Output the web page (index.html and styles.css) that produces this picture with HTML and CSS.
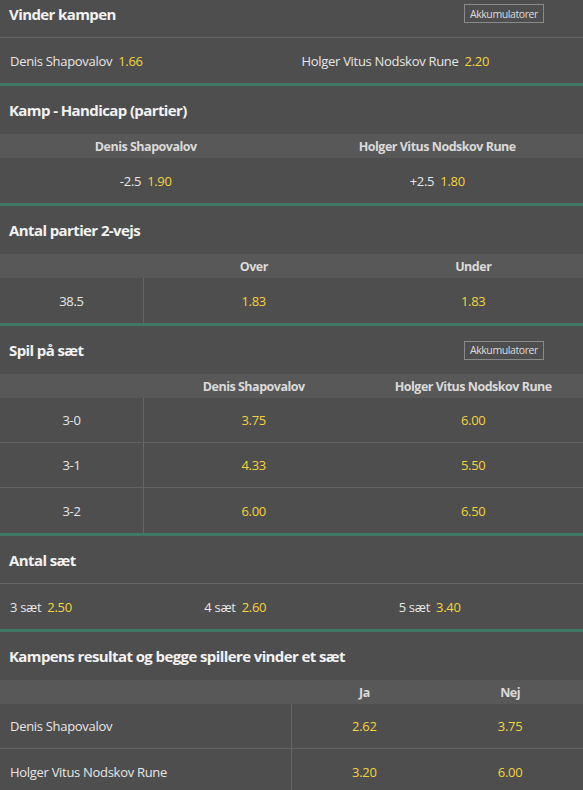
FILE: index.html
```html
<!DOCTYPE html>
<html lang="da">
<head>
<meta charset="utf-8">
<title>Tennis markeder</title>
<link rel="stylesheet" href="styles.css">
</head>
<body>
<div class="page">

  <section class="market">
    <div class="mtitle lined">
      <h2>Vinder kampen</h2>
      <span class="acc">Akkumulatorer</span>
    </div>
    <div class="row cols-2 left">
      <div class="cell"><span class="lbl">Denis Shapovalov</span><span class="odd">1.66</span></div>
      <div class="cell"><span class="lbl">Holger Vitus Nodskov Rune</span><span class="odd">2.20</span></div>
    </div>
  </section>

  <section class="market">
    <div class="mtitle"><h2>Kamp - Handicap (partier)</h2></div>
    <div class="band cols-2">
      <div class="hcell">Denis Shapovalov</div>
      <div class="hcell">Holger Vitus Nodskov Rune</div>
    </div>
    <div class="row cols-2 center">
      <div class="cell"><span class="lbl">-2.5</span><span class="odd">1.90</span></div>
      <div class="cell"><span class="lbl">+2.5</span><span class="odd">1.80</span></div>
    </div>
  </section>

  <section class="market">
    <div class="mtitle"><h2>Antal partier 2-vejs</h2></div>
    <div class="band cols-3">
      <div class="hcell"></div>
      <div class="hcell">Over</div>
      <div class="hcell">Under</div>
    </div>
    <div class="row cols-3 center">
      <div class="cell first"><span class="lbl">38.5</span></div>
      <div class="cell"><span class="odd solo">1.83</span></div>
      <div class="cell"><span class="odd solo">1.83</span></div>
    </div>
  </section>

  <section class="market">
    <div class="mtitle">
      <h2>Spil på sæt</h2>
      <span class="acc">Akkumulatorer</span>
    </div>
    <div class="band cols-3">
      <div class="hcell"></div>
      <div class="hcell">Denis Shapovalov</div>
      <div class="hcell">Holger Vitus Nodskov Rune</div>
    </div>
    <div class="row cols-3 center">
      <div class="cell first"><span class="lbl">3-0</span></div>
      <div class="cell"><span class="odd solo">3.75</span></div>
      <div class="cell"><span class="odd solo">6.00</span></div>
    </div>
    <div class="row cols-3 center">
      <div class="cell first"><span class="lbl">3-1</span></div>
      <div class="cell"><span class="odd solo">4.33</span></div>
      <div class="cell"><span class="odd solo">5.50</span></div>
    </div>
    <div class="row cols-3 center">
      <div class="cell first"><span class="lbl">3-2</span></div>
      <div class="cell"><span class="odd solo">6.00</span></div>
      <div class="cell"><span class="odd solo">6.50</span></div>
    </div>
  </section>

  <section class="market">
    <div class="mtitle lined"><h2>Antal sæt</h2></div>
    <div class="row cols-3even left">
      <div class="cell"><span class="lbl">3 sæt</span><span class="odd">2.50</span></div>
      <div class="cell"><span class="lbl">4 sæt</span><span class="odd">2.60</span></div>
      <div class="cell"><span class="lbl">5 sæt</span><span class="odd">3.40</span></div>
    </div>
  </section>

  <section class="market">
    <div class="mtitle"><h2>Kampens resultat og begge spillere vinder et sæt</h2></div>
    <div class="band cols-wide">
      <div class="hcell"></div>
      <div class="hcell">Ja</div>
      <div class="hcell">Nej</div>
    </div>
    <div class="row cols-wide center">
      <div class="cell first leftcell"><span class="lbl">Denis Shapovalov</span></div>
      <div class="cell"><span class="odd solo">2.62</span></div>
      <div class="cell"><span class="odd solo">3.75</span></div>
    </div>
    <div class="row cols-wide center">
      <div class="cell first leftcell"><span class="lbl">Holger Vitus Nodskov Rune</span></div>
      <div class="cell"><span class="odd solo">3.20</span></div>
      <div class="cell"><span class="odd solo">6.00</span></div>
    </div>
  </section>

</div>
</body>
</html>
```

FILE: styles.css
```css
* { box-sizing: border-box; }

html, body {
  margin: 0;
  padding: 0;
  background: #4e4e4e;
}

body {
  font-family: "Open Sans", "Noto Sans", "Liberation Sans", sans-serif;
  font-size: 13px;
  color: #e6e6e6;
  overflow: hidden;
}

.page {
  margin-top: -10px;
}

.market {
  border-bottom: 3px solid #3e7a63;
}

.mtitle {
  height: 48px;
  display: flex;
  align-items: center;
  justify-content: space-between;
  padding: 0 39px 0 9px;
}

.mtitle.lined {
  border-bottom: 1px solid #666666;
}

.mtitle h2 {
  margin: 0;
  font-size: 15px;
  font-weight: 700;
  color: #f2f2f2;
  letter-spacing: -0.6px;
}

.acc {
  display: inline-flex;
  align-items: center;
  height: 19px;
  padding: 0 5px;
  border: 1px solid #8a8a8a;
  font-size: 10.5px;
  color: #dcdcdc;
  letter-spacing: -0.4px;
}

.band {
  height: 24px;
  background: #585858;
  display: grid;
  align-items: center;
  font-weight: 700;
  color: #dadada;
  font-size: 12.5px;
  letter-spacing: -0.5px;
}

.hcell {
  text-align: center;
}

.row {
  height: 45px;
  display: grid;
  border-bottom: 1px solid #646464;
}

.row:last-child {
  border-bottom: none;
}

.cols-2 { grid-template-columns: 1fr 1fr; }
.cols-3 { grid-template-columns: 144px 1fr 1fr; }
.cols-3even { grid-template-columns: 1fr 1fr 1fr; }
.cols-wide { grid-template-columns: 2fr 1fr 1fr; }

.cell {
  display: flex;
  align-items: center;
  letter-spacing: -0.3px;
}

.row.left .cell {
  padding-left: 10px;
}

.row.center .cell {
  justify-content: center;
}

.row.center .cell.leftcell {
  justify-content: flex-start;
  padding-left: 10px;
}

.cell.first {
  border-right: 1px solid #666666;
}

.lbl {
  color: #e6e6e6;
}

.odd {
  color: #f3d43b;
  margin-left: 6px;
}

.odd.solo {
  margin-left: 0;
}
```
